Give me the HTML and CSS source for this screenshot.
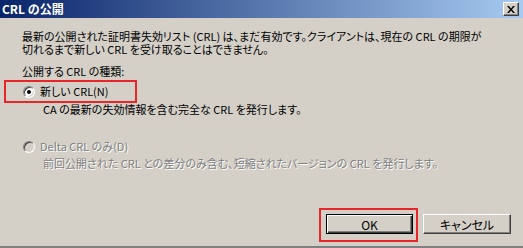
FILE: index.html
```html
<!DOCTYPE html>
<html lang="ja">
<head>
<meta charset="utf-8">
<title>CRL の公開</title>
<link rel="stylesheet" href="styles.css">
</head>
<body>
<div class="window">
  <div class="titlebar">
    <span class="title">CRL の公開</span>
    <span class="close"><svg width="8" height="7" viewBox="0 0 8 7"><path d="M0 0h2l2 2.5L6 0h2L5 3.5 8 7H6L4 4.5 2 7H0l3-3.5z" fill="#000"/></svg></span>
  </div>
  <div class="content">
    <p class="intro">最新の公開された証明書失効リスト (CRL) は、まだ有効です。クライアントは、現在の CRL の期限が<br>切れるまで新しい CRL を受け取ることはできません。</p>
    <div class="group-label">公開する CRL の種類:</div>
    <div class="option highlight">
      <span class="radio checked"></span>
      <span class="opt-text">新しい CRL(N)</span>
    </div>
    <div class="desc">CA の最新の失効情報を含む完全な CRL を発行します。</div>
    <div class="option disabled">
      <span class="radio"></span>
      <span class="opt-text">Delta CRL のみ(D)</span>
    </div>
    <div class="desc disabled second">前回公開された CRL との差分のみ含む、短縮されたバージョンの CRL を発行します。</div>
    <div class="buttons">
      <div class="hl-btn"><span class="btn default">OK</span></div>
      <span class="btn cancel">キャンセル</span>
    </div>
  </div>
</div>
</body>
</html>
```
FILE: styles.css
```css
* { box-sizing: border-box; }
html, body { margin: 0; padding: 0; }
body {
  width: 523px;
  height: 248px;
  overflow: hidden;
  background: #d4d0c8;
  font-family: "Noto Sans CJK JP", "Liberation Sans", sans-serif;
  font-size: 11px;
  color: #000;
}
.window {
  width: 523px;
  height: 248px;
  display: flex;
  flex-direction: column;
  border-bottom: 2px solid #808080;
}
.titlebar {
  height: 18px;
  flex: none;
  background: linear-gradient(to right, #0a246a, #a6caf0);
  display: flex;
  align-items: center;
  justify-content: space-between;
  padding: 0 4px 0 2px;
}
.title {
  color: #fff;
  font-weight: bold;
  font-size: 12px;
  line-height: 14px;
}
.close {
  width: 16px;
  height: 14px;
  background: #d4d0c8;
  border-top: 1px solid #fff;
  border-left: 1px solid #fff;
  border-right: 1px solid #404040;
  border-bottom: 1px solid #404040;
  box-shadow: inset -1px -1px 0 #808080;
  display: flex;
  align-items: center;
  justify-content: center;
}
.close svg { display: block; }
.content {
  flex: 1;
  padding: 12px 12px 0 22px;
  display: flex;
  flex-direction: column;
  align-items: flex-start;
  font-feature-settings: "palt";
}
.intro {
  margin: 0;
  line-height: 13px;
  white-space: nowrap;
}
.group-label {
  margin-top: 9px;
  line-height: 13px;
}
.option {
  display: flex;
  align-items: center;
  gap: 5px;
  line-height: 13px;
}
.highlight {
  margin-left: -18px;
  margin-top: 2px;
  width: 133px;
  height: 23px;
  border: 2px solid #e8262a;
  padding-left: 17px;
}
.radio {
  width: 12px;
  height: 12px;
  border-radius: 50%;
  background: #fff;
  border: 1px solid;
  border-color: #808080 #fff #fff #808080;
  box-shadow: inset 1px 1px 0 #404040, inset -1px -1px 0 #d4d0c8;
  position: relative;
  flex: none;
}
.radio.checked::after {
  content: "";
  position: absolute;
  left: 3px;
  top: 3px;
  width: 4px;
  height: 4px;
  border-radius: 50%;
  background: #000;
}
.desc {
  margin-left: 21px;
  margin-top: 0;
  line-height: 13px;
  white-space: nowrap;
}
.option.disabled {
  margin-top: 24px;
  margin-left: 1px;
}
.disabled .radio { background: #d4d0c8; }
.disabled .opt-text, .desc.disabled {
  color: #808080;
  text-shadow: 1px 1px 0 #fff;
}
.desc.second { margin-top: 4px; }
.buttons {
  margin-top: auto;
  margin-bottom: 4px;
  align-self: flex-end;
  display: flex;
  align-items: flex-start;
  gap: 5px;
}
.hl-btn {
  border: 2px solid #e8262a;
  padding: 4px 3px 6px 5px;
}
.btn {
  height: 20px;
  display: flex;
  align-items: center;
  justify-content: center;
  background: #d4d0c8;
  border-top: 1px solid #fff;
  border-left: 1px solid #fff;
  border-right: 1px solid #404040;
  border-bottom: 1px solid #404040;
  box-shadow: inset -1px -1px 0 #808080;
  font-size: 12px;
  line-height: 13px;
}
.btn.default {
  width: 87px;
  border: 1px solid #000;
  box-shadow: inset 1px 1px 0 #fff, inset -1px -1px 0 #404040, inset -2px -2px 0 #808080;
}
.btn.cancel {
  width: 88px;
  margin-top: 6px;
}
```
